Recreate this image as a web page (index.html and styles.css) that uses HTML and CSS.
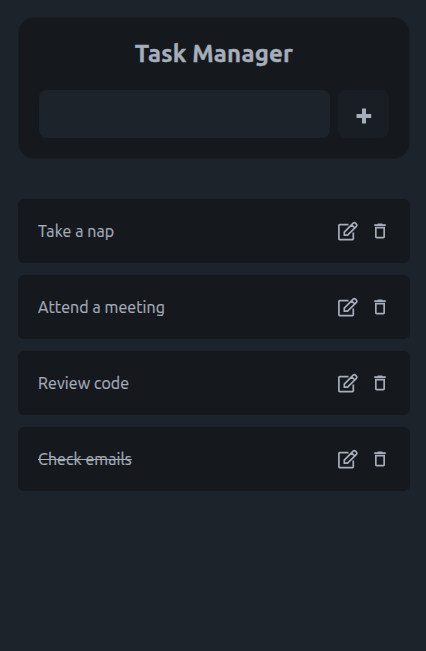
FILE: index.html
```
<!DOCTYPE html>
<html lang="en">
<head>
<meta charset="utf-8">
<title>Task Manager</title>
<link rel="stylesheet" href="styles.css">
</head>
<body>
<svg width="0" height="0" class="sprite" aria-hidden="true">
  <symbol id="edit" viewBox="0 0 22 22"><path d="M11.500 4.600H2.700Q1.900 4.600 1.900 5.400V18.800Q1.900 19.600 2.700 19.600H15.500Q16.300 19.600 16.300 18.800V12.600M7.300 15.200V12.100L16.200 3.200Q17.300 2.100 18.400 3.200L19.400 4.200Q20.500 5.300 19.400 6.400L10.600 15.200ZM14.600 4.800L17.800 8" fill="none" stroke="currentColor" stroke-width="1.700" stroke-linejoin="round"/></symbol>
  <symbol id="trash" viewBox="0 0 24 24"><path fill="currentColor" d="M6 19c0 1.1.9 2 2 2h8c1.1 0 2-.9 2-2V7H6v12zM8 9h8v10H8V9zm7.5-5l-1-1h-5l-1 1H5v2h14V4h-3.500z"/></symbol>
</svg>
<main class="page">
  <section class="card">
    <h1 class="title">Task Manager</h1>
    <form class="form">
      <input class="field" type="text" aria-label="Task">
      <button class="add" type="button" aria-label="Add"><svg width="16" height="16" viewBox="0 0 16 16"><path fill="currentColor" d="M6 .5h4v5.500h5.200v4H10v5.500H6V10H.500V6H6z"/></svg></button>
    </form>
  </section>
  <ul class="tasks">
    <li class="task"><span class="label">Take a nap</span><svg class="edit"><use href="#edit"/></svg><svg class="trash"><use href="#trash"/></svg></li>
    <li class="task"><span class="label">Attend a meeting</span><svg class="edit"><use href="#edit"/></svg><svg class="trash"><use href="#trash"/></svg></li>
    <li class="task"><span class="label">Review code</span><svg class="edit"><use href="#edit"/></svg><svg class="trash"><use href="#trash"/></svg></li>
    <li class="task"><span class="label done">Check emails</span><svg class="edit"><use href="#edit"/></svg><svg class="trash"><use href="#trash"/></svg></li>
  </ul>
</main>
</body>
</html>
```
FILE: styles.css
```
* { box-sizing: border-box; }
body {
  margin: 0;
  min-height: 651px;
  background: #1d232a;
  color: #a6adbb;
  font-family: Ubuntu, "Noto Sans", sans-serif;
  font-size: 16px;
  line-height: 24px;
}
.sprite { display: block; }
.page { padding: 17px 16px 0 18px; }
.card {
  height: 142px;
  padding: 20px 20px 0;
  background: #15191e;
  border: 1px solid #191e24;
  border-radius: 16px;
}
.title {
  margin: 0;
  font-size: 24px;
  line-height: 32px;
  font-weight: 700;
  letter-spacing: 0.22px;
  -webkit-text-stroke: 0.4px currentColor;
  text-align: center;
}
.form { display: flex; gap: 8px; margin: 20px 0 0; }
.field {
  flex: 1;
  min-width: 0;
  height: 48px;
  border: 0;
  border-radius: 8px;
  background: #1d232a;
  color: inherit;
  font: inherit;
}
.add {
  display: flex;
  align-items: center;
  justify-content: center;
  width: 51px;
  height: 48px;
  padding: 3px 0 0;
  border: 0;
  border-radius: 8px;
  background: #191e24;
  color: #a6adbb;
}
.tasks {
  display: grid;
  gap: 12px;
  margin: 40px 0 0;
  padding: 0;
  list-style: none;
}
.task {
  display: flex;
  align-items: center;
  height: 64px;
  padding: 0 20px;
  border-radius: 6px;
  background: #15191e;
}
.label {
  letter-spacing: 0.08px;
  -webkit-text-stroke: 0.2px currentColor;
  white-space: nowrap;
}
.edit { width: 22px; height: 22px; margin-left: auto; }
.trash { width: 20px; height: 20px; margin-left: 11px; }
.done { text-decoration: line-through; }
```
